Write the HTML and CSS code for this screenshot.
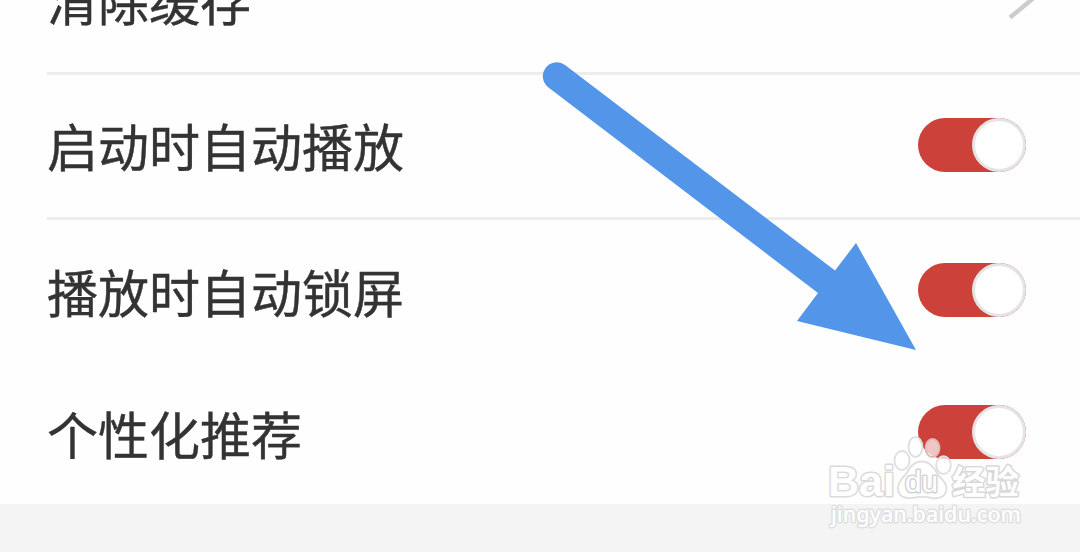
FILE: index.html
```html
<!DOCTYPE html>
<html lang="zh-CN">
<head>
<meta charset="utf-8">
<title>设置</title>
<link rel="stylesheet" href="styles.css">
</head>
<body>
<main class="settings">
  <div class="row row-cache"><span class="label">清除缓存</span>
    <svg class="chevron" width="32" height="36" viewBox="0 0 32 36"><path d="M8 -3 L31 15.500 L8 34.500"/></svg>
  </div>
  <div class="row row-divided"><span class="label">启动时自动播放</span><span class="switch"><span class="knob"></span></span></div>
  <div class="row row-lock"><span class="label">播放时自动锁屏</span><span class="switch"><span class="knob"></span></span></div>
  <div class="row row-recommend"><span class="label">个性化推荐</span><span class="switch"><span class="knob"></span></span></div>
</main>
<svg class="overlay" width="1080" height="552" viewBox="0 0 1080 552">
  <path class="arrow" d="M565 65 L835 270.500 L856 243 L916 350 L797 321 L818 293 L548.500 87.500 A13.800 13.800 0 0 1 565 65Z"/>
  <g class="mark">
    <ellipse cx="902" cy="460.500" rx="7.500" ry="9.500"/>
    <ellipse cx="915.500" cy="447" rx="7" ry="9.800"/>
    <ellipse class="toe" cx="932.500" cy="448" rx="7" ry="9"/>
    <ellipse cx="943.500" cy="465" rx="7.300" ry="8.800"/>
    <path d="M922 461.500 C930 461.500 934 467 937 473 C940 479 947 481 946.500 489 C946 497 939 499 932 498 C925 496.500 919 496.500 912 498 C904 499 898 496 898 488 C898 480 904 478 908 471 C911 465 915 461.500 922 461.500Z"/>
    <text class="brand" x="828" y="496" textLength="67" lengthAdjust="spacingAndGlyphs">Bai</text>
    <text class="du" x="905" y="492" textLength="33" lengthAdjust="spacingAndGlyphs">du</text>
    <text class="brand-cn" x="952" y="494" textLength="67" lengthAdjust="spacingAndGlyphs">经验</text>
    <text class="site" x="831" y="522" textLength="190" lengthAdjust="spacingAndGlyphs">jingyan.baidu.com</text>
  </g>
</svg>
</body>
</html>
```
FILE: styles.css
```css
* { box-sizing: border-box; }
body {
  margin: 0;
  width: 1080px;
  height: 552px;
  overflow: hidden;
  background: #f4f4f4;
  font-family: "Noto Sans CJK SC", sans-serif;
}
.settings {
  height: 504px;
  overflow: hidden;
  background: #fefefe;
}
.row {
  display: flex;
  align-items: center;
  justify-content: space-between;
  margin-left: 47px;
  padding-right: 54px;
}
.row-cache {
  height: 145px;
  margin-top: -70px;
  border-bottom: 3px solid #ededed;
}
.row-divided {
  height: 145px;
  padding-bottom: 2px;
  border-bottom: 3px solid #ededed;
}
.row-lock { height: 140px; }
.row-recommend { height: 144px; }
.label {
  color: #333;
  font-size: 51px;
  line-height: 74px;
  -webkit-text-stroke: .4px #333;
  white-space: nowrap;
}
.row-cache .label { padding-bottom: 4px; }
.row-lock .label,
.row-recommend .label { padding-top: 2px; }
.chevron {
  margin-right: -8px;
  fill: none;
  stroke: #ccc;
  stroke-width: 4.5;
}
.switch {
  display: flex;
  justify-content: flex-end;
  width: 108px;
  height: 54px;
  border-radius: 27px;
  background: #cc4139;
}
.knob {
  width: 54px;
  height: 54px;
  border: 3px solid #e4e4e4;
  border-radius: 50%;
  background: #fff;
}
.overlay {
  position: absolute;
  top: 0;
  left: 0;
}
.arrow { fill: #5295e9; }
.mark {
  fill: #fff;
  fill-opacity: .7;
  stroke: #dedede;
  stroke-width: 1.8;
}
.mark text {
  paint-order: stroke;
  stroke-width: 3;
  stroke-linejoin: round;
  fill-opacity: 1;
}
.mark .toe { stroke: #dcb8b6; }
.mark .brand { font: bold 43px "Liberation Sans", Arial, sans-serif; stroke: #dadada; }
.mark .du { font: 29px "Liberation Sans", Arial, sans-serif; stroke: #d4d4d4; }
.mark .brand-cn { font: bold 33px "Noto Sans CJK SC", sans-serif; stroke: #d8d8d8; }
.mark .site { font: 500 22px "Noto Sans", sans-serif; stroke: #e0e0e0; }
```
